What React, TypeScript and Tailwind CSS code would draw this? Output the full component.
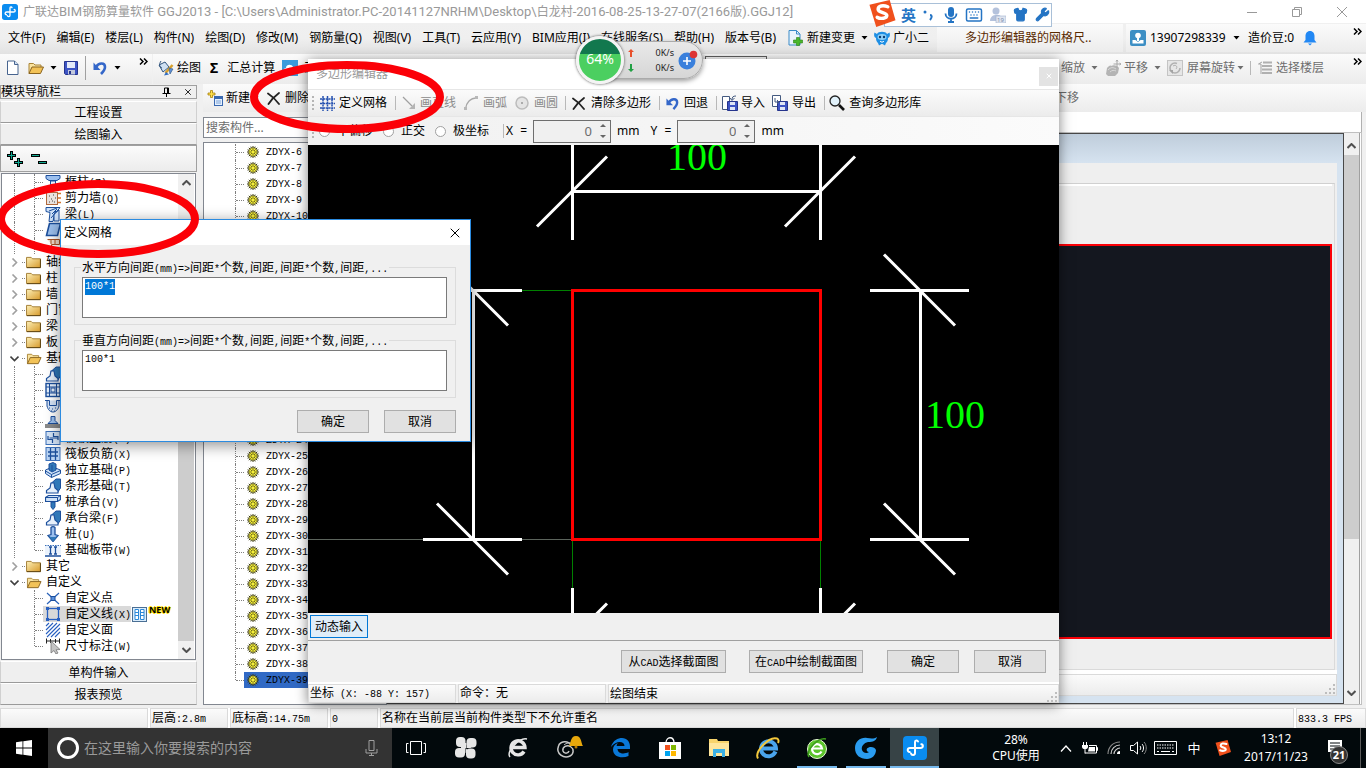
import React, { useEffect, useRef, useState } from "react";
import { Keyboard, Shirt, Wrench, X } from "lucide-react";

type IconProps = { className?: string };

const SANS = "font-['Noto_Sans','Noto_Sans_CJK_SC',sans-serif]";
const STRIP = "bg-linear-to-b from-[#fbfbfb] to-[#ececec]";
const PUSH =
  "border border-[#adadad] bg-[#e1e1e1] text-xs leading-4 h-[23px] flex items-center justify-center";
const MONO = "font-['Liberation_Mono',monospace] text-[10px] leading-none";

// Latin runs are half the width of a CJK glyph in the classic bitmap font
const Mixed = ({ text, latin = MONO }: { text: string; latin?: string }) => (
  <span className="whitespace-pre">
    {text.split(/([\x20-\x7e]+)/).map((part, i) =>
      i % 2 ? (
        <span key={i} className={latin}>
          {part}
        </span>
      ) : (
        part
      )
    )}
  </span>
);

const Caret = ({ className = "text-black" }: IconProps) => (
  <svg viewBox="0 0 7 4" className={`w-[7px] h-1 shrink-0 ${className}`}>
    <path d="M0.5 0h6L3.5 3.5z" fill="currentColor" />
  </svg>
);

const More = ({ className = "" }: IconProps) => (
  <svg viewBox="0 0 9 7" className={`w-[9px] h-[7px] shrink-0 ${className}`}>
    <path d="M1 0.5l3 3-3 3M5 0.5l3 3-3 3" fill="none" stroke="#000" strokeWidth="1.5" />
  </svg>
);

const Sep = ({ className = "" }: IconProps) => (
  <span className={`w-px h-[14px] bg-[#b8b8b8] shrink-0 ${className}`} />
);

const Grip = () => (
  <span className="w-0 h-[14px] border-l-2 border-dotted border-[#b5b5b5] shrink-0" />
);

const Chevron = ({ open, className = "" }: { open?: boolean; className?: string }) => (
  <svg viewBox="0 0 9 9" className={`w-[9px] h-[9px] shrink-0 ${className}`}>
    <path
      d={open ? "M0.5 2.5l4 4 4-4" : "M2.5 0.5l4 4-4 4"}
      fill="none"
      stroke={open ? "#404040" : "#a0a0a0"}
      strokeWidth="1.6"
    />
  </svg>
);

const ScrollArrow = ({ down }: { down?: boolean }) => (
  <svg viewBox="0 0 9 6" className="w-[9px] h-[6px]">
    <path
      d={down ? "M0.5 1l4 4 4-4" : "M0.5 5l4-4 4 4"}
      fill="none"
      stroke="#505050"
      strokeWidth="2"
    />
  </svg>
);

const SizeGrip = () => (
  <svg viewBox="0 0 10 10" className="w-[10px] h-[10px] shrink-0">
    <path d="M8 0h2v2h-2zM4 4h2v2h-2zM8 4h2v2h-2zM0 8h2v2h-2zM4 8h2v2h-2zM8 8h2v2h-2z" fill="#bdbdbd" />
  </svg>
);

const AppLogo = ({ className = "w-4 h-4" }: IconProps) => (
  <svg viewBox="0 0 24 24" className={`shrink-0 ${className}`}>
    <rect width="24" height="24" rx="4" fill="#0a8cf0" />
    <path
      d="M12 6v11c0 2.500-3.500 2.500-4 .5M12 6c0-2 2.500-2 3-.5M12 12H7c-3 0-3 4-.3 4M12 12h5.500c3 0 3-3.500.8-3.800"
      fill="none"
      stroke="#fff"
      strokeWidth="2"
      strokeLinecap="round"
    />
  </svg>
);

const NewDoc = () => (
  <svg viewBox="0 0 12 15" className="w-3 h-[15px] shrink-0">
    <path d="M0.500 1h7l3.500 3.500v10h-10.500z" fill="#fff" stroke="#47648f" />
    <path d="M7.500 1v3.500h3.500" fill="#cfe0f5" stroke="#47648f" />
  </svg>
);

const OpenFolder = ({ className = "w-4 h-4" }: IconProps) => (
  <svg viewBox="0 0 16 16" className={`shrink-0 ${className}`}>
    <path d="M1 13.500v-10h4.500l1.500 1.500h6v3" fill="#f9e3a0" stroke="#a98436" />
    <path d="M1 13.500l3-6.500h11.500l-3 6.500z" fill="#f2c257" stroke="#8a6420" />
  </svg>
);

const Folder = () => (
  <svg viewBox="0 0 16 14" className="w-[15px] h-[13px] shrink-0">
    <defs>
      <linearGradient id="fold" x1="0" y1="0" x2="1" y2="1">
        <stop offset="0" stopColor="#fdf0b8" />
        <stop offset="1" stopColor="#d79a2b" />
      </linearGradient>
    </defs>
    <path d="M0.500 12.500v-11h5l1.500 1.500h8.500v9.500z" fill="url(#fold)" stroke="#a07a30" />
    <path d="M1 12.500h14.500v-9" fill="none" stroke="#5c4210" />
  </svg>
);

const Floppy = ({ className = "w-[14px] h-[14px]" }: IconProps) => (
  <svg viewBox="0 0 14 14" className={`shrink-0 ${className}`}>
    <path d="M0.500 0.500h13v13h-12l-1-1z" fill="#3d54c4" stroke="#26348c" />
    <rect x="3" y="1" width="8" height="6" fill="#e4eaf8" />
    <rect x="4" y="9" width="7" height="4.500" fill="#c2c9dc" />
    <rect x="5" y="10" width="2" height="3" fill="#26348c" />
  </svg>
);

const Undo = ({ className = "w-[14px] h-[14px]" }: IconProps) => (
  <svg viewBox="0 0 14 14" className={`shrink-0 ${className}`}>
    <path d="M3 6C6 1 12 1.500 12 6c0 3-2 5-4 7" fill="none" stroke="#3467c9" strokeWidth="2.600" />
    <path d="M0.500 1.500v7.500h7z" fill="#3467c9" />
  </svg>
);

const PaintIcon = () => (
  <svg viewBox="0 0 17 16" className="w-[17px] h-4 shrink-0">
    <path d="M2 5l6-3 4 5-6 5z" fill="#cfe0f2" stroke="#32557e" />
    <path d="M4 1c-2 3-2 6 1 7" fill="none" stroke="#32557e" />
    <path d="M15.500 5l-7 8" stroke="#d8a02c" strokeWidth="2.500" />
    <path d="M9 12l3 2.500-5 1z" fill="#2f6cc0" />
    <path d="M12 8l4 1-3 5z" fill="#5d8fd6" stroke="#32557e" strokeWidth=".6" />
  </svg>
);

const CloudIcon = () => (
  <svg viewBox="0 0 16 16" className="w-4 h-4 shrink-0">
    <rect width="16" height="16" fill="#3a9bdc" />
    <path d="M4 12c-3 0-3-4 0-4 0-4 6-4 7-1 3 0 3 5 0 5z" fill="#fff" />
    <path d="M5 10l3-2 3 2" fill="none" stroke="#3a9bdc" />
  </svg>
);

const NewPart = () => (
  <svg viewBox="0 0 16 16" className="w-4 h-4 shrink-0">
    <path d="M3.500 0.500h2v2.500h2.500v2h-2.500v2.500h-2v-2.500h-2.500v-2h2.500z" fill="#ffe14a" stroke="#a8820c" strokeWidth=".8" />
    <rect x="7.500" y="6.500" width="8" height="9" fill="#e5f0fd" stroke="#3a69b0" />
    <path d="M7.500 8h8" stroke="#3a69b0" strokeWidth="2" />
    <path d="M9 11h5M9 13h5" stroke="#7ba2d8" />
  </svg>
);

const Cross = () => (
  <svg viewBox="0 0 13 13" className="w-[13px] h-[13px] shrink-0">
    <path d="M1 1.500C5 4 9 8 12 12M12 1C8 4 4 8 1.500 12" fill="none" stroke="#222" strokeWidth="1.800" strokeLinecap="round" />
  </svg>
);

const HandIcon = () => (
  <svg viewBox="0 0 16 16" className="w-4 h-4 shrink-0">
    <path d="M2 8c2-2 3-3 4-2 3-2 7 0 8 2l-1 5-3 3H3l-2-2z" fill="#b4b4b4" />
    <path d="M3 10c3-3 5-3 8-1M5 12c2-2 4-2 6-1" fill="none" stroke="#d8d8d8" />
    <path d="M12 0v8M8.500 4h7M11 1.500l1-1.500 1 1.500M14.500 3l1.500 1-1.500 1" fill="none" stroke="#a8a8a8" />
  </svg>
);

const RotateIcon = () => (
  <svg viewBox="0 0 16 16" className="w-4 h-4 shrink-0">
    <rect x=".5" y=".5" width="15" height="15" fill="#e6e6e6" stroke="#c4c4c4" />
    <circle cx="8" cy="8" r="5" fill="none" stroke="#b0b0b0" strokeWidth="1.600" strokeDasharray="25 6" />
    <path d="M6 6c3-2 5 1 3 3" fill="none" stroke="#b0b0b0" />
    <path d="M2 10h4v4z" fill="#a4a4a4" />
  </svg>
);

const FloorsIcon = () => (
  <svg viewBox="0 0 15 14" className="w-[15px] h-[14px] shrink-0">
    <path d="M5 1.500h9M4 5h10M4 8.500h10M4 12h10" stroke="#b0b0b0" strokeWidth="2" />
    <path d="M4 1L0.500 3H3v10" fill="none" stroke="#a4a4a4" />
  </svg>
);

const Gear = () => (
  <svg viewBox="0 0 12 12" className="w-3 h-3 shrink-0">
    <path
      d="M6 0v12M0 6h12M1.800 1.800l8.400 8.400M10.200 1.800l-8.400 8.400M3.800 .6l4.400 10.800M8.200 .6L3.800 11.400M.6 3.800l10.800 4.400M.6 8.200l10.800-4.400"
      stroke="#3a380a"
      strokeWidth="1"
    />
    <circle cx="6" cy="6" r="4.200" fill="#f5ef3c" stroke="#3a380a" strokeWidth=".6" />
    <path d="M6 2.500v7M2.500 6h7M3.500 3.500l5 5M8.500 3.500l-5 5" stroke="#3a380a" strokeWidth=".7" />
    <circle cx="6" cy="6" r="1.300" fill="#f5ef3c" />
  </svg>
);

const S = "#1c4f9c";
const L = "#9cc0ee";
const PART_ICONS: Record<string, React.ReactNode> = {
  column: (
    <>
      <path d="M1 1.500h14v3l-3 2h-8l-3-2z" fill={L} stroke={S} />
      <path d="M5.500 7v9h5v-9z" fill="#e4effc" stroke={S} />
    </>
  ),
  wall: (
    <>
      <rect x="1.500" y="2.500" width="11" height="12" fill="#e9e2de" stroke="#b0683c" />
      <path d="M4 6h1M8 5h1M6 9h1M10 8h1M4 12h1M9 12h1M7 11h1" stroke="#444" />
      <path d="M13 3.500h3M13 8h3M13 12.500h3" stroke="#d4762c" strokeWidth="1.500" />
    </>
  ),
  beam: (
    <>
      <path d="M1 1.500h14l-3 4h-2l-2 10h-4l1-9-4-1z" fill="#cfe2f8" stroke={S} />
      <path d="M9 15V8l5-4v11z" fill="#cfe2f8" stroke={S} />
      <path d="M4 5l8-3M6 12l7-8M7 8l5-5" stroke={S} fill="none" />
    </>
  ),
  slab: <path d="M4.500 1.500h11l-3 12h-11z" fill={L} stroke={S} strokeWidth="1.600" />,
  brick: (
    <>
      <path d="M2.500 1.500h12v5h-8v9h8" fill="#f3ddcc" stroke="#a85426" />
      <path d="M6 2v4M10 2v4M6 10h8" stroke="#a85426" />
    </>
  ),
  strip: (
    <>
      <path d="M6 5.500l5-4.500h4.500v9l-3 4.500-5-5z" fill="#2f78b8" stroke={S} />
      <path d="M1.500 15v-2.500l3.500-2.500 1-5h3l1 5 3 2.500v2.500z" fill="#e6f0fb" stroke={S} strokeWidth="1.200" />
    </>
  ),
  raft: (
    <>
      <rect x="1" y="1.500" width="14" height="13" fill="#e4effc" stroke={S} strokeWidth="1.400" />
      <path d="M4.500 1.500v13M11.500 1.500v13M1 5h14M1 11h14" stroke={S} />
      <rect x="6" y="6" width="4" height="4" fill="none" stroke={S} />
    </>
  ),
  pit: (
    <>
      <path d="M0 2.500h4.500v5h7v-5h4.500M2 3v5c2 8 10 8 12 0v-5" fill="#d5e4f7" stroke={S} />
      <path d="M4 10h1M7 11h1M10 10h1M6 13h1M9 13h1" stroke={S} />
    </>
  ),
  cushion: (
    <>
      <rect x="0" y="10" width="16" height="4" fill="#8a8a8a" />
      <path d="M3 9.500l3-3v-4h4v4l3 3z" fill={L} stroke={S} />
    </>
  ),
  main: (
    <>
      <rect x="1" y="1.500" width="14" height="13" fill="#d5e5f8" stroke="#3c70b8" />
      <path d="M3 6v3.500h4.500V13M13 10V6.500H8.500V3M7.500 8h5M8.500 8h-4" fill="none" stroke={S} strokeWidth="1.200" />
    </>
  ),
  negative: (
    <>
      <rect x="1" y="1.500" width="14" height="13" fill="#b8d2f2" stroke="#3c70b8" />
      <path d="M5.500 2v12M10.500 2v12M3 6h10M3 10h10" stroke={S} strokeWidth="1.300" />
    </>
  ),
  pad: (
    <>
      <path d="M0.500 8l7-3 8 3v3.500l-9 4-6-4z" fill="#cfe2f8" stroke={S} />
      <path d="M4 2l4-1.500 3 1.500v6l-4 2-3-2z" fill="#2f78b8" stroke={S} />
      <path d="M7 3v6M.5 9l6 3.500 9-4M6.500 12.500v3" fill="none" stroke={S} />
    </>
  ),
  cap: (
    <>
      <path d="M0.500 3.500l3-2h12v4l-3 2h-12z" fill="#cfe2f8" stroke={S} strokeWidth="1.200" />
      <path d="M.5 3.500h12l3-2M12.500 3.500v4" fill="none" stroke={S} />
      <path d="M6 8h4v5l-2 2.500-2-2.500z" fill="#2f78b8" stroke={S} />
    </>
  ),
  pile: (
    <>
      <path d="M6 1.500c1-1 3-1 4 0v7l3 1-5 6-5-6 3-1z" fill="#9cc0ee" stroke={S} strokeWidth="1.300" />
      <path d="M3 9.500c2 2 8 2 10 0l-5 6z" fill="#2f78b8" />
    </>
  ),
  band: (
    <>
      <path d="M0 3.500h16v9H0z" fill="#eaf2fc" />
      <path d="M0 3.500h16" stroke="#3c70b8" strokeDasharray="1.500 1" />
      <path d="M0 14h16M5.500 5v7M10.500 5v7M4 5h3M9 5h3M4 12h3M9 12h3" stroke={S} strokeWidth="1.300" />
    </>
  ),
  point: (
    <>
      <path d="M2 3l12 11M14 3L2 14" stroke="#2a62b8" strokeWidth="1.200" />
      <rect x="6" y="6.500" width="4" height="4" fill="#5a90dc" stroke={S} />
    </>
  ),
  line: (
    <>
      <rect x="2.500" y="2.500" width="11" height="11" fill="none" stroke="#2860c0" strokeWidth="1.300" />
      <path d="M1 1h3v3H1zM12 1h3v3h-3zM1 12h3v3H1zM12 12h3v3h-3z" fill="#2860c0" />
    </>
  ),
  area: (
    <path d="M1 4l3-3M1 8l7-7M1 12l11-11M2 15L15 2M6 15l9-9M10 15l5-5" stroke="#2860c0" strokeWidth="1.100" />
  ),
  dimension: (
    <>
      <path d="M1 3h14M1.500 0.500v5M14.500 0.500v5M5.500 1v4M10.500 1v4" stroke="#222" />
      <path d="M6 3l9 8.500-4 .3 2 3.200-2 1-2-3.500-3 2.500z" fill="#c4c4c4" stroke="#777" strokeWidth=".8" />
    </>
  ),
};

const TREE: { label: string; icon?: string; open?: boolean; last?: boolean; orphan?: boolean }[] = [
  { label: "框柱(Z)", icon: "column" },
  { label: "剪力墙(Q)", icon: "wall" },
  { label: "梁(L)", icon: "beam" },
  { label: "现浇板(B)", icon: "slab" },
  { label: "砌体墙(Q)", icon: "brick" },
  { label: "轴线" },
  { label: "柱" },
  { label: "墙" },
  { label: "门窗洞" },
  { label: "梁" },
  { label: "板" },
  { label: "基础", open: true },
  { label: "基础梁(F)", icon: "strip" },
  { label: "筏板基础(M)", icon: "raft" },
  { label: "集水坑(K)", icon: "pit" },
  { label: "柱墩(Y)", icon: "cushion" },
  { label: "筏板主筋(R)", icon: "main" },
  { label: "筏板负筋(X)", icon: "negative" },
  { label: "独立基础(P)", icon: "pad" },
  { label: "条形基础(T)", icon: "strip" },
  { label: "桩承台(V)", icon: "cap" },
  { label: "承台梁(F)", icon: "strip" },
  { label: "桩(U)", icon: "pile" },
  { label: "基础板带(W)", icon: "band", last: true },
  { label: "其它" },
  { label: "自定义", open: true },
  { label: "自定义点", icon: "point", orphan: true },
  { label: "自定义线(X)", icon: "line", orphan: true },
  { label: "自定义面", icon: "area", orphan: true },
  { label: "尺寸标注(W)", icon: "dimension", orphan: true, last: true },
];

const TreeRow = ({ item }: { item: (typeof TREE)[number] }) => {
  if (!item.icon) {
    return (
      <li className="h-4 flex items-center pl-2">
        <Chevron open={item.open} />
        <span className="w-[3px] ml-[3px] mr-px border-t border-dotted border-[#808080]" />
        {item.open ? <OpenFolder className="w-4 h-[15px]" /> : <Folder />}
        <span className={item.open ? "ml-1" : "ml-[5px]"}>{item.label}</span>
      </li>
    );
  }
  const selected = item.label === "自定义线(X)";
  return (
    <li className="h-4 flex items-center pl-3">
      <span
        className={`w-5 h-4 shrink-0 ${item.orphan ? "" : "border-l border-dotted border-[#808080]"}`}
      />
      <span
        className={`w-0 shrink-0 border-l border-dotted border-[#808080] ${
          item.last ? "h-2 self-start" : "h-4"
        }`}
      />
      <span className="w-2 shrink-0 border-t border-dotted border-[#808080]" />
      <span className={`flex items-center h-4 pl-[2px] shrink-0 ${selected ? "bg-[#d9d9d9]" : ""}`}>
        <svg viewBox="0 0 16 16" className="w-4 h-4 shrink-0 mr-1">
          {PART_ICONS[item.icon]}
        </svg>
        <Mixed text={item.label} />
      </span>
      {selected && (
        <>
          <svg viewBox="0 0 15 15" className="w-[15px] h-[15px] shrink-0 ml-px">
            <rect x=".5" y=".5" width="14" height="14" fill="#d9ecfc" stroke="#4a6f94" />
            <path d="M3 2.500h3.500v10H3zM8.500 2.500H12v10H8.500zM3 5.500h3.500M8.500 5.500H12M3 8.500h3.500M8.500 8.500H12" fill="#fff" stroke="#2c88d8" />
          </svg>
          <span className="ml-[2px] -mt-2 text-[9px] leading-3 font-bold text-black [text-shadow:1px_0_#ffe000,-1px_0_#ffe000,0_1px_#ffe000,0_-1px_#ffe000]">
            NEW
          </span>
        </>
      )}
    </li>
  );
};

const NavButton = ({ children }: { children: React.ReactNode }) => (
  <button
    type="button"
    className="h-[22px] w-full border-t border-t-white border-b border-b-[#9a9a9a] border-x border-x-[#d0d0d0] bg-[#efefef] flex items-center justify-center pt-[2px]"
  >
    {children}
  </button>
);

const NavPanel = () => (
  <nav className="w-[197px] shrink-0 flex flex-col text-xs leading-4 pt-px">
    <div className="h-[14px] flex items-center border border-[#a0a0a0] pr-[3px]">
      <span className="flex-1 leading-3">模块导航栏</span>
      <svg viewBox="0 0 9 10" className="w-[9px] h-[10px] mr-3">
        <path d="M2.500 6V1h4v5M5.500 1v5M0.500 6.500h8M4.500 7v3" fill="none" stroke="#000" />
      </svg>
      <X className="w-[10px] h-[10px]" strokeWidth={2} />
    </div>
    <div className="h-[2px]" />
    <NavButton>工程设置</NavButton>
    <NavButton>绘图输入</NavButton>
    <div className={`h-[27px] border border-[#a0a0a0] flex items-center pl-[6px] gap-2 ${STRIP}`}>
      <svg viewBox="0 0 16 16" className="w-4 h-4">
        <path d="M4.500 0v9M0 4.500h9M11.500 7v9M7 11.500h9" stroke="#000" strokeWidth="3" />
        <path d="M4.500 1v7M1 4.500h7M11.500 8v7M8 11.500h7" stroke="#10a890" strokeWidth="1" />
      </svg>
      <svg viewBox="0 0 16 16" className="w-4 h-4">
        <path d="M0 4.500h9M7 11.500h9" stroke="#000" strokeWidth="3" />
        <path d="M1 4.500h7M8 11.500h7" stroke="#10a890" strokeWidth="1" />
      </svg>
    </div>
    <div className="flex-1 min-h-0 mx-px mt-px border border-[#828790] bg-white flex">
      <ul className="flex-1 min-w-0 overflow-hidden h-[480px]">
        {TREE.map((item, i) => (
          <TreeRow key={i} item={item} />
        ))}
      </ul>
      <div className="w-4 mr-[1px] bg-[#f0f0f0] flex flex-col items-center">
        <span className="h-[17px] flex items-center">
          <ScrollArrow />
        </span>
        <span className="flex-1" />
        <span className="h-[380px] w-full bg-[#cdcdcd]" />
        <span className="h-[18px] flex items-center">
          <ScrollArrow down />
        </span>
      </div>
    </div>
    <div className="h-px" />
    <NavButton>单构件输入</NavButton>
    <NavButton>报表预览</NavButton>
    <div className="h-[3px]" />
  </nav>
);

const MENUS = [
  "文件(F)", "编辑(E)", "楼层(L)", "构件(N)", "绘图(D)", "修改(M)", "钢筋量(Q)",
  "视图(V)", "工具(T)", "云应用(Y)", "BIM应用(I)", "在线服务(S)", "帮助(H)", "版本号(B)",
];

const MenuBar = () => (
  <div className="h-[31px] pb-[2px] bg-linear-to-b from-[#f0f0f0] via-[#efefef] to-[#e2e2e2] flex items-center text-xs leading-4 whitespace-nowrap">
    <div className="flex gap-[11px] pl-2">
      {MENUS.map((m) => (
        <span key={m}>{m}</span>
      ))}
    </div>
    <div className="ml-auto flex items-center shrink-0">
      <svg viewBox="0 0 15 16" className="w-[15px] h-4">
        <path d="M1 .5h7.500l3.500 3.500v11H1z" fill="#eaf4fd" stroke="#3a8bc8" />
        <path d="M8.500.5v3.500h3.500" fill="none" stroke="#3a8bc8" />
        <path d="M8.500 7.500h3v2.500h3v3h-3v2.500h-3V13h-3v-3h3z" fill="#4ab82c" stroke="#2b7f18" strokeWidth=".6" />
      </svg>
      <span className="ml-1">新建变更</span>
      <Caret className="ml-[6px] text-black" />
      <svg viewBox="0 0 16 16" className="w-4 h-4 ml-[6px]">
        <path d="M3 4c1-3 9-3 10 0l2.500-1.500c1 3 0 5-1.500 5.500 0 3-1 4-2 5l-1 2.500-2.500-1.500h-1L5 15.500 4 13C3 12 2 11 2 8 .5 7.500-.5 5.500.5 2.500z" fill="#1f8fe4" />
        <ellipse cx="8" cy="7" rx="4.500" ry="3" fill="#8fd0f8" />
        <circle cx="6" cy="7" r="1.200" fill="#0c3c70" />
        <circle cx="10" cy="7" r="1.200" fill="#0c3c70" />
        <path d="M6 11c1 1.500 3 1.500 4 0" fill="none" stroke="#fff" />
      </svg>
      <span className="ml-[3px]">广小二</span>
      <div className={`ml-2 h-7 w-[186px] pl-7 flex items-center text-[#5a2a00] ${STRIP}`}>
        多边形编辑器的网格尺..
      </div>
      <div className={`ml-[3px] h-7 w-[240px] pl-1 flex items-center ${STRIP}`}>
        <svg viewBox="0 0 16 16" className="w-4 h-4">
          <rect width="16" height="16" rx="2" fill="#3d8fc4" />
          <circle cx="8" cy="5.500" r="2.800" fill="#fff" />
          <path d="M2.500 10h3l2.500 2 2.500-2h3v3.500h-11z" fill="#fff" />
          <path d="M7 8h2v3H7z" fill="#fff" />
        </svg>
        <span className="ml-1 w-[78px] text-xs">13907298339</span>
        <Caret className="ml-[5px] text-black" />
        <span className="ml-2 w-[50px]">造价豆:0</span>
        <svg viewBox="0 0 14 16" className="w-[14px] h-4 ml-[5px]">
          <path d="M7 1c-3 0-4.500 2.500-4.500 5v4L.5 12.500h13l-2-2.500V6c0-2.500-1.500-5-4.500-5z" fill="#2288f4" />
          <path d="M5 13.500h4L7 15.500z" fill="#2288f4" />
        </svg>
        <More className="ml-auto mr-1 mb-3" />
      </div>
    </div>
  </div>
);

const MainToolbar = () => (
  <div className="h-[30px] flex items-center text-xs leading-4 whitespace-nowrap">
    <div className={`h-full w-[152px] pl-[7px] pb-[3px] flex items-center ${STRIP}`}>
      <NewDoc />
      <OpenFolder className="w-4 h-4 ml-[9px]" />
      <Caret className="ml-[6px] text-black" />
      <Floppy className="w-[14px] h-[14px] ml-[7px]" />
      <span className="w-px h-6 bg-[#a0a0a0] ml-[7px]" />
      <Undo className="w-[14px] h-[14px] ml-[7px]" />
      <Caret className="ml-[7px] text-black" />
      <More className="ml-auto mr-1 mb-3" />
    </div>
    <div className={`h-full flex-1 ml-px pl-1 pb-[3px] flex items-center ${STRIP}`}>
      <PaintIcon />
      <span className="ml-[3px]">绘图</span>
      <span className="ml-[9px] font-bold text-sm leading-4">Σ</span>
      <span className="ml-[9px]">汇总计算</span>
      <span className="w-[7px]" />
      <CloudIcon />
      <span className="ml-[5px]">云检查</span>
      <div className="ml-auto w-[305px] flex items-center text-[#6d6d6d]">
        <span>缩放</span>
        <Caret className="ml-[6px] text-[#6d6d6d]" />
        <span className="w-[7px]" />
        <HandIcon />
        <span className="ml-[3px]">平移</span>
        <Caret className="ml-[6px] text-[#6d6d6d]" />
        <span className="w-[6px]" />
        <RotateIcon />
        <span className="ml-1">屏幕旋转</span>
        <Caret className="ml-[2px] text-[#6d6d6d]" />
        <Sep className="ml-[6px] mr-[7px]" />
        <FloorsIcon />
        <span className="ml-[3px]">选择楼层</span>
        <More className="ml-auto mr-1 mb-3" />
      </div>
    </div>
  </div>
);

const PARTS = Array.from({ length: 34 }, (_, i) => `ZDYX-${i + 6}`);

const PartList = () => (
  <div className="w-[184px] shrink-0 flex flex-col pt-[5px] text-xs leading-4">
    <input
      type="text"
      aria-label="搜索构件"
      placeholder="搜索构件..."
      className="h-[21px] w-[180px] shrink-0 border border-[#828790] bg-white px-[2px] text-xs placeholder:text-[#6d6d6d]"
    />
    <ul className="mt-1 flex-1 min-h-0 overflow-hidden border border-[#828790] bg-white pt-px">
      {PARTS.map((part) => {
        const selected = part === "ZDYX-39";
        return (
          <li key={part} className="h-4 flex items-center pl-[31px]">
            <span
              className={`border-l border-dotted border-[#808080] ${selected ? "h-2 self-start" : "h-4"}`}
            />
            <span className="w-2 border-t border-dotted border-[#808080]" />
            <span
              className={`flex-1 h-4 flex items-center pl-[3px] ${selected ? "bg-[#316ac5]" : ""}`}
            >
              <Gear />
              <span className={`ml-[7px] pt-px ${MONO}`}>{part}</span>
            </span>
          </li>
        );
      })}
    </ul>
  </div>
);

const SectionView = () => (
  <div className="flex-1 min-w-0 flex flex-col mr-1">
    <div className="h-5 border-r border-[#b0b0b0] bg-white" />
    <div className="flex-1 min-h-0 border-y border-r border-[#c0c0c0] flex">
      <div className="flex-1 border border-[#484848] bg-[#d6e3f0] flex flex-col pr-[6px] pb-[7px]">
        <div className="h-[29px] -mr-[6px] bg-linear-to-b from-[#bfcddb] to-[#d6e3f0]" />
        <div className="flex-1 bg-[#efefef] flex flex-col pt-5 pr-[2px]">
          <div className="flex-1 border border-[#dadada] border-t-[#d0d0d0] flex flex-col pr-[2px]">
            <div className="h-[60px] border-t-2 border-white" />
            <div className="flex-1 border-2 border-[#fb0007] bg-[#14171f]" />
            <div className="h-[30px]" />
          </div>
        </div>
        <div className="h-1 bg-white" />
        <div className={`h-[22px] border border-[#dadada] flex items-end justify-end p-px ${STRIP}`}>
          <SizeGrip />
        </div>
      </div>
      <div className="w-[15px] mt-[3px] bg-[#f0f0f0] flex flex-col items-center">
        <span className="h-[19px] flex items-center">
          <ScrollArrow />
        </span>
        <span className="h-96 w-full bg-[#cdcdcd]" />
        <span className="flex-1" />
        <span className="h-[22px] flex items-center">
          <ScrollArrow down />
        </span>
      </div>
      <div className="w-[2px] border-l border-[#a0a0a0] bg-white" />
    </div>
    <div className="h-[3px]" />
  </div>
);

const Spinner = ({ id, label }: { id: string; label: string }) => (
  <div className="flex items-center gap-[6px]">
    <label htmlFor={id} className="w-[21px] flex justify-between">
      <span>{label}</span>
      <span>=</span>
    </label>
    <span className="h-[23px] w-[78px] border border-[#6e6e6e] flex items-center bg-[#f0f0f0]">
      <input
        id={id}
        defaultValue="0"
        disabled
        className="flex-1 min-w-0 text-right text-[#6d6d6d] text-[13px] leading-4 pr-1"
      />
      <span className="flex flex-col gap-2 w-[14px] items-center">
        <svg viewBox="0 0 6 3" className="w-[6px] h-[3px]">
          <path d="M0 3h6L3 0z" fill="#666" />
        </svg>
        <svg viewBox="0 0 6 3" className="w-[6px] h-[3px]">
          <path d="M0 0h6L3 3z" fill="#666" />
        </svg>
      </span>
    </span>
    <span>mm</span>
  </div>
);

const OFFSETS = ["不偏移", "正交", "极坐标"];

const EditorCanvas = () => (
  <svg viewBox="0 0 751 468" className="block w-full h-[468px] bg-black">
    <g stroke="#008000" strokeWidth="1" shapeRendering="crispEdges">
      <path d="M0 145.500h265M264.500 395v48M512.500 395v48" />
      <path d="M0 394.500h264" stroke="#5c645c" />
    </g>
    <g stroke="#fff" strokeWidth="3" fill="none">
      <path d="M264.500 0v95M512.500 0v95M264 46.500h248M264.500 443v25M512.500 443v25" />
      <path d="M165.500 145v250M115 145.500h99M115 394.500h99M612.500 145v250M562 145.500h99M562 394.500h99" />
      <path d="M229 81.500l70-70M477 81.500l70-70M299 458.500l-20 20M547 458.500l-20 20" />
      <path d="M129 109.500l71 71M129 358.500l71 71M576 109.500l71 71M576 358.500l71 71" />
    </g>
    <rect x="264.500" y="145.500" width="248" height="249" fill="none" stroke="#f00" strokeWidth="3" />
    <g fill="#0f0" fontFamily="Liberation Serif, serif" fontSize="40">
      <text x="359" y="25">100</text>
      <text x="617" y="283">100</text>
    </g>
  </svg>
);

const PolygonEditor = () => {
  const [offset, setOffset] = useState("不偏移");
  return (
    <section className="absolute left-[308px] top-[59px] w-[751px] bg-[#f0f0f0] shadow-[0_2px_12px_rgba(0,0,0,0.5)] text-xs leading-4 whitespace-nowrap">
      <header className="h-[30px] bg-white flex items-center justify-between pl-2 pr-px text-[#999]">
        <span>多边形编辑器</span>
        <button type="button" aria-label="关闭" className="mt-1 w-[19px] h-[19px] bg-[#e3e3e3] flex items-center justify-center text-white">
          <X className="w-2 h-2" strokeWidth={3} />
        </button>
      </header>
      <div className={`h-[27px] flex items-center pl-1 border-t border-[#e6e6e6] ${STRIP}`}>
        <Grip />
        <svg viewBox="0 0 15 15" className="w-[15px] h-[15px] ml-[6px]">
          <path d="M3 0v15M7.500 0v15M12 0v15M0 3h15M0 7.500h15M0 12h15" stroke="#2450b0" strokeWidth="1.500" strokeDasharray="2.200 .6" />
        </svg>
        <span className="ml-1">定义网格</span>
        <Sep className="ml-2 mr-[6px]" />
        <span className="flex items-center text-[#8a8a8a]">
          <svg viewBox="0 0 14 14" className="w-[14px] h-[14px]">
            <path d="M1 1l9 9" stroke="#a0a0a0" strokeWidth="1.300" />
            <path d="M13 13H7l6-6z" fill="#b4b4b4" />
          </svg>
          <span className="ml-1">画直线</span>
          <svg viewBox="0 0 14 14" className="w-[14px] h-[14px] ml-2">
            <path d="M1.500 13C2 7 6 2 13 2" fill="none" stroke="#a8a8a8" strokeWidth="1.300" />
            <path d="M0 11h3v3H0zM11 0h3v3h-3z" fill="#b8b8b8" />
          </svg>
          <span className="ml-[5px]">画弧</span>
          <svg viewBox="0 0 14 14" className="w-[14px] h-[14px] ml-2">
            <circle cx="7" cy="7" r="6" fill="#e4e4e4" stroke="#bcbcbc" strokeWidth="1.500" />
            <circle cx="7" cy="7" r="1" fill="#999" />
          </svg>
          <span className="ml-[5px]">画圆</span>
        </span>
        <Sep className="ml-[7px] mr-[6px]" />
        <Cross />
        <span className="ml-[6px]">清除多边形</span>
        <Sep className="ml-2 mr-[6px]" />
        <Undo className="w-[13px] h-[13px]" />
        <span className="ml-[5px]">回退</span>
        <Sep className="ml-2 mr-[5px]" />
        <svg viewBox="0 0 16 16" className="w-4 h-4">
          <path d="M.5 1.500h7v13h-7z" fill="#fff" stroke="#445a80" />
          <path d="M5.500 6.500h10v9h-10z" fill="#3d54c4" stroke="#26348c" />
          <path d="M8 7h5v3H8zM8 12h5v3H8z" fill="#dfe5f5" />
          <path d="M14 1c-3 0-4 1-4 4M8 3l2 2.500L12.500 3" fill="none" stroke="#445a80" />
        </svg>
        <span className="ml-[3px]">导入</span>
        <svg viewBox="0 0 16 16" className="w-4 h-4 ml-[7px]">
          <path d="M.5.500h8v11h-8z" fill="#fff" stroke="#445a80" />
          <path d="M5.500 6.500h10v9h-10z" fill="#3d54c4" stroke="#26348c" />
          <path d="M8 7h5v3H8zM8 12h5v3H8z" fill="#dfe5f5" />
          <path d="M3 3v4h4M5 5l2 2-2 2" fill="none" stroke="#445a80" />
        </svg>
        <span className="ml-1">导出</span>
        <Sep className="ml-2 mr-1" />
        <svg viewBox="0 0 16 16" className="w-4 h-4">
          <circle cx="6" cy="6" r="5" fill="#e2f2fb" stroke="#222" strokeWidth="1.300" />
          <path d="M10 10l5 5" stroke="#111" strokeWidth="2.600" />
        </svg>
        <span className="ml-1">查询多边形库</span>
      </div>
      <div className="h-[29px] flex items-center pl-1 bg-linear-to-r from-[#f0f0f0] to-[#fbfbfb] border-t border-[#e6e6e6]">
        <Grip />
        <div className="flex items-center gap-[10px] w-[189px] pl-[5px]">
          {OFFSETS.map((o) => (
            <label key={o} className="flex items-center gap-[7px]">
              <input
                type="radio"
                name="offset"
                checked={offset === o}
                onChange={() => setOffset(o)}
                className="appearance-none w-[11px] h-[11px] rounded-full border border-[#a0a0a0] bg-white"
              />
              {o}
            </label>
          ))}
        </div>
        <Sep className="mr-[2px]" />
        <div className="flex items-center gap-[11px]">
          <Spinner id="x-offset" label="X" />
          <Spinner id="y-offset" label="Y" />
        </div>
      </div>
      <EditorCanvas />
      <div className="h-[27px] px-[2px] pt-[2px]">
        <button type="button" className="w-[58px] h-[23px] border border-[#0078d7] bg-[#e0eef9]">
          动态输入
        </button>
      </div>
      <div className="h-[42px] border-t border-[#a0a0a0] flex items-center justify-end pr-[13px]">
        <button type="button" className={`${PUSH} w-[105px]`}>
          <Mixed text="从CAD选择截面图" />
        </button>
        <button type="button" className={`${PUSH} w-[114px] ml-[23px]`}>
          <Mixed text="在CAD中绘制截面图" />
        </button>
        <button type="button" className={`${PUSH} w-[72px] ml-6`}>确定</button>
        <button type="button" className={`${PUSH} w-[72px] ml-[15px]`}>取消</button>
      </div>
      <footer className="h-[21px] border-t-2 border-white flex gap-[2px]">
        <span className={`w-[148px] border border-[#dadada] px-px ${STRIP}`}>
          <Mixed text="坐标 (X: -88 Y: 157)" />
        </span>
        <span className={`w-[148px] border border-[#dadada] px-px ${STRIP}`}>
          命令：无
        </span>
        <span className={`flex-1 border border-[#dadada] px-px flex justify-between items-end ${STRIP}`}>
          绘图结束
          <SizeGrip />
        </span>
      </footer>
    </section>
  );
};

const SpacingField = ({
  id,
  label,
  inputRef,
}: {
  id: string;
  label: string;
  inputRef?: React.Ref<HTMLTextAreaElement>;
}) => (
  <div className="relative border border-[#dcdcdc] h-[58px] pl-[7px] pr-2 pt-[9px]">
    <label htmlFor={id} className="absolute left-[6px] -top-2 px-px bg-[#f0f0f0]">
      <Mixed text={label} />
    </label>
    <textarea
      id={id}
      ref={inputRef}
      defaultValue="100*1"
      className="block w-full h-[41px] resize-none border border-[#7a7a7a] bg-white px-[2px] pt-px font-['Liberation_Mono',monospace] text-[10px] leading-4 outline-none caret-transparent selection:bg-[#0078d7] selection:text-white"
    />
  </div>
);

const GridDialog = () => {
  const first = useRef<HTMLTextAreaElement>(null);

  useEffect(() => {
    first.current?.focus();
    first.current?.select();
  }, []);

  return (
    <section className="absolute left-[60px] top-[219px] w-[411px] border border-[#2b8be0] bg-[#f0f0f0] shadow-[0_3px_14px_rgba(0,0,0,0.45)] text-xs leading-4">
      <header className="h-[25px] bg-white flex items-center justify-between pl-[3px] pr-[7px]">
        <span>定义网格</span>
        <button type="button" aria-label="关闭">
          <X className="w-4 h-4" strokeWidth={1.5} />
        </button>
      </header>
      <form className="pt-[22px] pl-[13px] pr-[14px] pb-2">
        <SpacingField id="h-spacing" label="水平方向间距(mm)=>间距*个数,间距,间距*个数,间距,..." inputRef={first} />
        <div className="h-[15px]" />
        <SpacingField id="v-spacing" label="垂直方向间距(mm)=>间距*个数,间距,间距*个数,间距,..." />
        <div className="flex justify-end gap-[15px] mt-3">
          <button type="button" className={`${PUSH} w-[72px]`}>确定</button>
          <button type="button" className={`${PUSH} w-[72px]`}>取消</button>
        </div>
      </form>
    </section>
  );
};

const SogouMark = ({ className = "" }: IconProps) => (
  <svg viewBox="0 0 28 28" className={`shrink-0 ${className}`}>
    <path d="M1 5L22 0l6 21-20 7z" fill="#f0501c" />
    <path d="M20 7c-5-2-10-1-10 2.500 0 4 9 3 9 6.500 0 3-6 4-10 2" fill="none" stroke="#fff" strokeWidth="3.600" strokeLinecap="round" />
  </svg>
);

const SogouBar = () => (
  <div className="absolute right-[314px] top-0 flex items-center">
    <SogouMark className="w-7 h-[27px] z-10" />
    <div className="-ml-3 mt-[2px] h-6 w-[168px] border border-[#a9c0d8] bg-white flex items-center gap-[7px] pl-4 text-[#2474c4]">
      <span className="text-[15px] leading-4 font-bold">英</span>
      <svg viewBox="0 0 10 12" className="w-[10px] h-3">
        <circle cx="2" cy="3" r="1.500" fill="#2474c4" />
        <path d="M7 6c2 0 2.500 2 0 5" stroke="#2474c4" strokeWidth="2" fill="none" />
      </svg>
      <svg viewBox="0 0 14 16" className="w-[14px] h-4 ml-1">
        <rect x="4" y="0" width="6" height="10" rx="3" fill="#2474c4" />
        <path d="M1.500 6.500c0 7 11 7 11 0M7 12v3M4 15h6" fill="none" stroke="#2474c4" strokeWidth="1.800" />
      </svg>
      <Keyboard className="w-[18px] h-[18px]" />
      <svg viewBox="0 0 16 16" className="w-4 h-4">
        <circle cx="6" cy="4" r="3.500" fill="#b4c2dc" />
        <path d="M0 14c0-8 12-8 12-2v2z" fill="#b4c2dc" />
        <rect x="6" y="9" width="10" height="7" fill="#dfe5f0" stroke="#a0b0cc" strokeWidth=".6" />
        <text x="7" y="15" fontSize="6" fill="#7c8cac">19</text>
      </svg>
      <Shirt className="w-[15px] h-[15px]" fill="#2474c4" />
      <Wrench className="w-[15px] h-[15px]" fill="#2474c4" />
    </div>
  </div>
);

const SpeedBall = () => (
  <div className="absolute left-[576px] top-[35px] w-[127px] h-[50px] flex items-center">
    <div className="absolute inset-y-[6px] left-3 right-0 rounded-full border border-[#aaa] bg-linear-to-b from-[#e9e9e9] to-[#d6d6d6] shadow-[0_2px_5px_rgba(0,0,0,0.4)]" />
    <div className="relative w-[48px] h-[48px] rounded-full border-[3px] border-[#f4f4f4] bg-linear-to-b from-[#12784e] from-35% to-[#4bcf60] to-36% shadow-[0_0_3px_rgba(0,0,0,0.7)] flex items-center justify-center pb-[2px] text-sm leading-4 text-white">
      64%
    </div>
    <div className="relative ml-1 flex flex-col gap-[7px]">
      <svg viewBox="0 0 6 8" className="w-[6px] h-2">
        <path d="M3 0l3 3H4v5H2V3H0z" fill="#e8502c" />
      </svg>
      <svg viewBox="0 0 6 8" className="w-[6px] h-2">
        <path d="M3 8l3-3H4V0H2v5H0z" fill="#22a044" />
      </svg>
    </div>
    <div className="relative ml-[16px] w-[24px] text-[9px] leading-[15px] text-right text-[#222]">
      <div>0K/s</div>
      <div>0K/s</div>
    </div>
    <svg viewBox="0 0 20 20" className="relative w-5 h-5 ml-1">
      <circle cx="9" cy="11" r="8.500" fill="#3a80dc" />
      <path d="M9 7v8M5 11h8" stroke="#fff" strokeWidth="1.600" />
      <circle cx="15.500" cy="4.500" r="3.800" fill="#dc3434" />
    </svg>
  </div>
);

const StatusBar = () => {
  const cell = `h-full border border-[#dadada] px-px flex items-center ${STRIP}`;
  return (
    <footer className="h-5 bg-white flex gap-[2px] text-xs leading-4">
      <span className={`${cell} w-[148px]`} />
      <span className={`${cell} w-[78px]`}>
        <Mixed text="层高:2.8m" />
      </span>
      <span className={`${cell} w-[98px]`}>
        <Mixed text="底标高:14.75m" />
      </span>
      <span className={`${cell} w-12`}>
        <Mixed text="0" />
      </span>
      <span className={`${cell} flex-1`}>名称在当前层当前构件类型下不允许重名</span>
      <span className={`${cell} w-[70px]`}>
        <Mixed text="833.3 FPS" />
      </span>
    </footer>
  );
};

const EdgeE = ({ fill }: { fill: string }) => (
  <path
    d="M1 10C3 3 8 1 12 1c5 0 8 4 8 8.500V12H7.500c.3 5 7 5.500 11 3v4C12 22 3 20 3 12.500 3 9.500 5 7 8 6c-1 1-1.300 2-1.300 3h7.800C14.500 4 6 3 1 10z"
    fill={fill}
  />
);

const TASK_APPS: { name: string; width: string; active?: boolean; line?: string; art: React.ReactNode }[] = [
  {
    name: "Pinwheel",
    width: "w-[52px]",
    art: (
      <g fill="#e6e6e6">
        <rect x="1" y="0" width="9.500" height="10" rx="4" />
        <rect x="11.500" y="1" width="10" height="9.500" rx="4" />
        <rect x="11" y="11.500" width="9.500" height="10" rx="4" />
        <rect x="0" y="11" width="10" height="9.500" rx="4" />
        <path d="M6 6h5v5H6zM11.500 6v5h5z" />
        <path d="M11 11.500v5h5zM5 11h5.500v5z" />
      </g>
    ),
  },
  {
    name: "Browser",
    width: "w-[52px]",
    art: (
      <>
        <path d="M17 14.500A7 7 0 1 1 18 10.500H5" fill="none" stroke="#e6e6e6" strokeWidth="3.400" />
        <path d="M3 20C-1 15 12 0 20 2" fill="none" stroke="#e6e6e6" strokeWidth="1.500" />
      </>
    ),
  },
  {
    name: "Swirl",
    width: "w-[52px]",
    art: (
      <g transform="translate(-3 0)">
        <path d="M15 8C12 3 4 4 2.500 9-.5 17 8 22 14 19c4-2 4-7 1-9-4-3-9 0-8 4 1 3 5 3 6 0" fill="none" stroke="#c8c8c8" strokeWidth="1.500" />
        <path d="M17 7c-3-2-7-1-9 1" fill="none" stroke="#c8c8c8" />
        <path d="M13 9c2-2 1-10 7-10s5 8 7 10z" fill="#e8a80c" />
        <circle cx="20" cy="10" r="1.500" fill="#b87c04" />
      </g>
    ),
  },
  { name: "Edge", width: "w-[49px]", art: <EdgeE fill="#0a78d8" /> },
  {
    name: "Store",
    width: "w-[49px]",
    art: (
      <>
        <path d="M7 6c0-7 8-7 8 0" fill="none" stroke="#fff" strokeWidth="1.300" />
        <rect x="0" y="5" width="22" height="17" fill="#fff" />
        <rect x="6" y="8" width="5" height="5" fill="#f0501c" />
        <rect x="12" y="8" width="5" height="5" fill="#80b800" />
        <rect x="6" y="14" width="5" height="5" fill="#00a4f0" />
        <rect x="12" y="14" width="5" height="5" fill="#ffb800" />
      </>
    ),
  },
  {
    name: "Explorer",
    width: "w-[49px]",
    art: (
      <>
        <path d="M1 2h8l1 2h11v15H1z" fill="#f8d46c" />
        <path d="M1 6h20v13H1z" fill="#ffe69c" />
        <path d="M5 20v-8h12v8h-3v-4H8v4z" fill="#3cb0e4" />
      </>
    ),
  },
  {
    name: "Internet Explorer",
    width: "w-[49px]",
    art: (
      <>
        <path d="M18.500 14.500A7.500 7.500 0 1 1 19 11.500H6" fill="none" stroke="#4aa4ec" strokeWidth="4" />
        <path d="M1 21.500C-3 15 12-1 20 1.500c1.500.5 2 2.500 1 4.500" fill="none" stroke="#f4c83c" strokeWidth="2" />
      </>
    ),
  },
  {
    name: "Green Browser",
    width: "w-[49px]",
    line: "w-10",
    art: (
      <>
        <circle cx="11" cy="12" r="9.500" fill="#5cc42c" stroke="#e8f8d8" />
        <path d="M15.500 14.500A5 5 0 1 1 16 11.500H7" fill="none" stroke="#fff" strokeWidth="2.200" />
        <path d="M3 20C-1 14 12 0 20 2" fill="none" stroke="#3c9c1c" strokeWidth="1.600" />
      </>
    ),
  },
  {
    name: "G Browser",
    width: "w-[49px]",
    line: "w-10",
    art: (
      <path
        d="M22 0c-1 4-4 5-9 5-4 1-7 4-6 8 1 3 5 4 7 2-2 0-3-2-2-3.500 2-2.500 8-2 9 1.500 0 5-4 9-9 9C5 22 0 18 0 11 0 4 6 0 12 1c4 .6 7 1 10-1z"
        fill="#2a9cf0"
      />
    ),
  },
  { name: "GGJ2013", width: "w-[49px]", active: true, line: "w-full", art: null },
];

const Taskbar = () => (
  <footer className="h-10 bg-[#02090c] flex text-white text-xs leading-4">
    <button type="button" aria-label="开始" className="w-12 bg-black flex items-center justify-center">
      <svg viewBox="0 0 16 16" className="w-4 h-4">
        <path d="M0 2.200l6.500-.9v6.300H0zM7.300 1.200L16 0v7.600H7.300zM0 8.400h6.500v6.300L0 13.800zM7.300 8.400H16V16l-8.700-1.200z" fill="#fff" />
      </svg>
    </button>
    <div className="w-[344px] bg-[#333] flex items-center pl-[9px] pr-3">
      <span className="w-[22px] h-[22px] rounded-full border-[3px] border-white" />
      <input
        aria-label="搜索"
        placeholder="在这里输入你要搜索的内容"
        className="flex-1 min-w-0 ml-[5px] text-sm placeholder:text-[#9a9a9a] outline-none"
      />
      <svg viewBox="0 0 13 16" className="w-[13px] h-4 mr-[2px]">
        <path d="M4 .5h5v10H4zM1 9v4h11V9M6.500 13v2.500M4 15.500h5" fill="none" stroke="#a0a0a0" />
      </svg>
    </div>
    <button type="button" aria-label="任务视图" className="w-12 flex items-center justify-center">
      <svg viewBox="0 0 20 14" className="w-5 h-[14px]">
        <path d="M4.500.5h11v13h-11zM2.500 2.500h-2v9h2M17.500 2.500h2v9h-2" fill="none" stroke="#fff" />
      </svg>
    </button>
    {TASK_APPS.map((app) => (
      <button
        key={app.name}
        type="button"
        aria-label={app.name}
        className={`relative flex items-center justify-center ${app.width} ${app.active ? "bg-[#374346]" : ""}`}
      >
        {app.art ? (
          <svg viewBox="0 0 22 22" className="w-[22px] h-[22px] overflow-visible">
            {app.art}
          </svg>
        ) : (
          <AppLogo className="w-6 h-6" />
        )}
        {app.line && <span className={`absolute bottom-0 h-[2px] bg-[#76b9ed] ${app.line}`} />}
      </button>
    ))}
    <div className="ml-auto flex items-center">
      <div className="w-[76px] text-center">
        <div>28%</div>
        <div>CPU使用</div>
      </div>
      <span className="w-6 flex justify-center">
        <svg viewBox="0 0 12 7" className="w-3 h-[7px]">
          <path d="M1 6.500L6 1l5 5.500" fill="none" stroke="#fff" strokeWidth="1.300" />
        </svg>
      </span>
      <span className="w-6 flex justify-center">
        <svg viewBox="0 0 16 12" className="w-4 h-3">
          <path d="M1.500 0v3M4.500 0v3M3 6v5.500" fill="none" stroke="#fff" />
          <path d="M0 3h6v1.500c0 2-1 2.500-3 2.500s-3-.5-3-2.500z" fill="#fff" />
          <path d="M7 3.500h7.500v7.500H3M14.500 5.500h1v3h-1" fill="none" stroke="#fff" />
          <path d="M7 5h6v4.500H6z" fill="#fff" />
        </svg>
      </span>
      <span className="w-6 flex justify-center">
        <svg viewBox="0 0 14 14" className="w-[14px] h-[14px]">
          <path d="M1 13C1 6 6 1 13 1" fill="none" stroke="#888" strokeWidth="1.200" />
          <path d="M4 13c0-5 4-9 9-9M7 13c0-3 3-6 6-6" fill="none" stroke="#ccc" strokeWidth="1.200" />
          <path d="M10 13c0-2 1-3 3-3v3z" fill="#fff" />
        </svg>
      </span>
      <span className="w-6 flex justify-center">
        <svg viewBox="0 0 17 14" className="w-[17px] h-[14px]">
          <path d="M.5 4.500h3l4-3.500v12l-4-3.500h-3z" fill="none" stroke="#fff" />
          <path d="M10 5c1 1 1 3 0 4M12 3c2 2 2 6 0 8" fill="none" stroke="#fff" />
          <path d="M14 1c3 3 3 9 0 12" fill="none" stroke="#888" />
        </svg>
      </span>
      <span className="w-[30px] flex justify-center">
        <svg viewBox="0 0 23 14" className="w-[23px] h-[14px]">
          <path d="M.5.500h22v13H.5z" fill="none" stroke="#fff" />
          <path d="M3 4h17M3 7h17" stroke="#fff" strokeDasharray="1.500 1" />
          <path d="M3 10.500h2M7 10.500h9M18 10.500h2" stroke="#fff" />
        </svg>
      </span>
      <span className="w-7 text-center text-[13px] leading-4">中</span>
      <span className="w-[30px] flex justify-center">
        <SogouMark className="w-4 h-4" />
      </span>
      <div className="w-[76px] text-center">
        <div className="leading-[18px]">13:12</div>
        <div className="leading-[18px]">2017/11/23</div>
      </div>
      <div className="w-[46px] h-10 relative flex justify-center pt-3 pr-1">
        <svg viewBox="0 0 14 15" className="w-[14px] h-[15px]">
          <path d="M0 0h14v12H8l-3 3v-3H0z" fill="#fff" />
          <path d="M2 3h10M2 6h10M2 9h7" stroke="#02090c" />
        </svg>
        <span className="absolute left-4 top-[18px] w-[18px] h-[18px] rounded-full border border-[#888] bg-[#333] text-[11px] leading-4 font-bold text-center">
          21
        </span>
      </div>
      <span className="w-[6px] h-10 border-l border-[#5a5a5a]" />
    </div>
  </footer>
);

export default function App() {
  return (
    <div className={`relative h-screen overflow-hidden bg-[#f0f0f0] flex flex-col text-black ${SANS}`}>
      <header className="h-[23px] bg-white flex items-center pl-[2px] text-xs leading-4 text-[#999]">
        <AppLogo />
        <span className="ml-[5px]">
          <Mixed
            text="广联达BIM钢筋算量软件 GGJ2013 - [C:\Users\Administrator.PC-20141127NRHM\Desktop\白龙村-2016-08-25-13-27-07(2166版).GGJ12]"
            latin="font-['Roboto',sans-serif] text-[13px] leading-none"
          />
        </span>
        <div className="ml-auto mr-[19px] flex items-center gap-[35px]">
          <svg viewBox="0 0 10 10" className="w-[10px] h-[10px]">
            <path d="M0 5.500h10" stroke="#999" />
          </svg>
          <svg viewBox="0 0 10 10" className="w-[10px] h-[10px]">
            <path d="M.5 2.500h7v7h-7zM2.500 2.500v-2h7v7h-2" fill="none" stroke="#999" />
          </svg>
          <svg viewBox="0 0 10 10" className="w-[10px] h-[10px]">
            <path d="M0 0l10 10M10 0L0 10" stroke="#999" />
          </svg>
        </div>
      </header>
      <MenuBar />
      <MainToolbar />

      <main className="flex-1 min-h-0 flex">
        <NavPanel />
        <div className="flex-1 min-w-0 ml-[6px] flex flex-col">
          <div className={`h-7 shrink-0 flex items-center pl-1 text-xs leading-4 ${STRIP}`}>
            <NewPart />
            <span className="ml-[3px]">新建</span>
            <Caret className="ml-[2px] text-black" />
            <span className="w-2" />
            <Cross />
            <span className="ml-[5px]">删除</span>
            <span className="ml-auto mr-[287px] text-[#6d6d6d]">下移</span>
          </div>
          <div className="flex-1 min-h-0 flex">
            <div className="flex pb-[3px]">
              <PartList />
            </div>
            <SectionView />
          </div>
        </div>
      </main>

      <StatusBar />
      <Taskbar />

      {/* top edge of a tool window behind the editor */}
      <span className="absolute left-[705px] top-[56px] w-[62px] h-[3px] border border-b-0 border-[#606060]" />
      <PolygonEditor />
      <GridDialog />
      <SogouBar />
      <SpeedBall />

      <svg viewBox="0 0 480 270" className="absolute left-0 top-0 w-[480px] h-[270px] pointer-events-none">
        <ellipse cx="347" cy="97" rx="93" ry="32" fill="none" stroke="#fb0007" strokeWidth="8" />
        <ellipse cx="98" cy="219" rx="97" ry="35" fill="none" stroke="#fb0007" strokeWidth="8" />
      </svg>
    </div>
  );
}
